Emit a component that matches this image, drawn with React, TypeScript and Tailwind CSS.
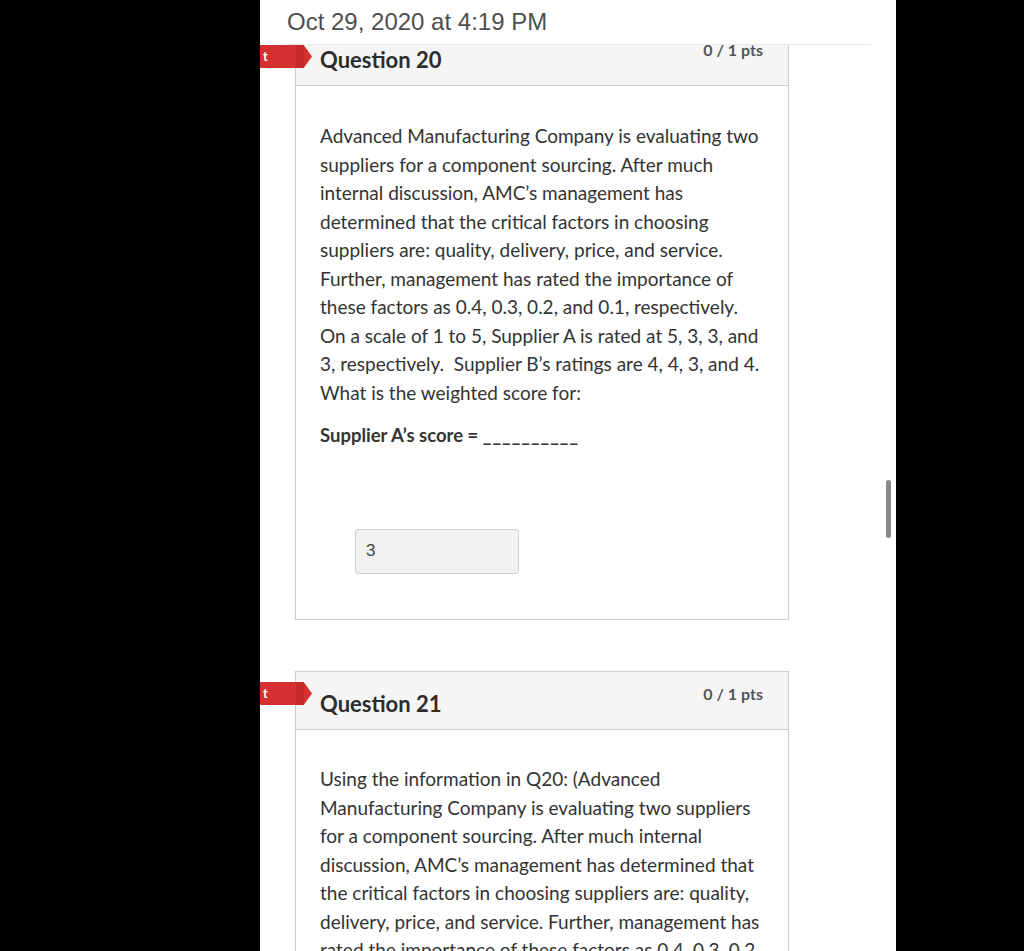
import React from 'react';

const lato = { fontFamily: 'Lato, "Open Sans", sans-serif' };
const arial = { fontFamily: '"Liberation Sans", Arial, sans-serif' };

interface CardProps {
  num: number;
  tagTop: string;
  children: React.ReactNode;
  className?: string;
}

function QuestionCard({ num, tagTop, children, className }: CardProps) {
  return (
    <div className={'relative ml-[35px] w-[494px] border border-[#c7cdd1] bg-white ' + (className ?? '')}>
      <div
        className={'absolute left-[-36px] z-20 h-[23px] w-[52px] bg-[#d3302f] [clip-path:polygon(0_0,84%_0,100%_50%,84%_100%,0_100%)] ' + tagTop}
      >
        <div className="absolute right-[8px] top-0 h-full w-[8px] bg-[#c42a2b]" />
        <span className="absolute left-[3px] top-[2px] text-[13px] font-bold leading-[18px] text-white" style={lato}>
          t
        </span>
      </div>
      <div className="relative flex h-[58px] items-start justify-between border-b border-[#c7cdd1] bg-[#f5f5f5] pl-[24px] pr-[25px]">
        <h2 className="pt-[18px] text-[22px] font-bold leading-[27px] text-[#2d2d2d]" style={lato}>
          Question {num}
        </h2>
        <span className="pt-[12px] text-[16px] font-bold leading-[20px] text-[#555]" style={lato}>
          0 / 1 pts
        </span>
      </div>
      {children}
    </div>
  );
}

export default function App() {
  return (
    <div className="h-[951px] w-[1024px] overflow-hidden bg-black">
      <div className="relative ml-[260px] h-[951px] w-[636px] overflow-hidden bg-white">
        <div className="relative z-10 ml-[27px] mr-[25px] h-[45px] border-b border-[#e8e8e8] bg-white pt-[8px]">
          <p className="text-[24px] leading-[28px] text-[#4f4f4f]" style={arial}>
            Oct 29, 2020 at 4:19 PM
          </p>
        </div>

        <QuestionCard num={20} tagTop="top-[17px]" className="-mt-[18px] h-[593px]">
          <div className="px-[24px] pt-[36px] text-[19px] leading-[28.5px] text-[#333]" style={lato}>
            <p>
              Advanced Manufacturing Company is evaluating two suppliers for a component sourcing. After much
              internal discussion, AMC’s management has determined that the critical factors in choosing
              suppliers are: quality, delivery, price, and service. Further, management has rated the importance
              of these factors as 0.4, 0.3, 0.2, and 0.1, respectively. On a scale of 1 to 5, Supplier A is rated
              at 5, 3, 3, and 3, respectively.&nbsp; Supplier B’s ratings are 4, 4, 3, and 4. What is the weighted
              score for:
            </p>
            <p className="mt-[14px] text-[18.5px] font-bold">
              Supplier A’s score = <span className="tracking-[1px]">__________</span>
            </p>
            <div className="mt-[79px] ml-[35px] flex h-[45px] w-[164px] items-center rounded-[3px] border border-[#cfcfcf] bg-[#f1f1f1] px-[10px]">
              <span className="text-[17px] text-[#444]" style={arial}>
                3
              </span>
            </div>
          </div>
        </QuestionCard>

        <QuestionCard num={21} tagTop="top-[10px]" className="mt-[51px]">
          <div className="px-[24px] pt-[35px] pb-[40px] text-[19px] leading-[28.5px] text-[#333]" style={lato}>
            <p>
              Using the information in Q20: (Advanced Manufacturing Company is evaluating two suppliers for a
              component sourcing. After much internal discussion, AMC’s management has determined that the
              critical factors in choosing suppliers are: quality, delivery, price, and service. Further,
              management has rated the importance of these factors as 0.4, 0.3, 0.2, and 0.1, respectively.
            </p>
          </div>
        </QuestionCard>

        <div className="absolute left-[626px] top-[480px] h-[58px] w-[5px] rounded-full bg-[#8a8a8a]" />
      </div>
    </div>
  );
}
